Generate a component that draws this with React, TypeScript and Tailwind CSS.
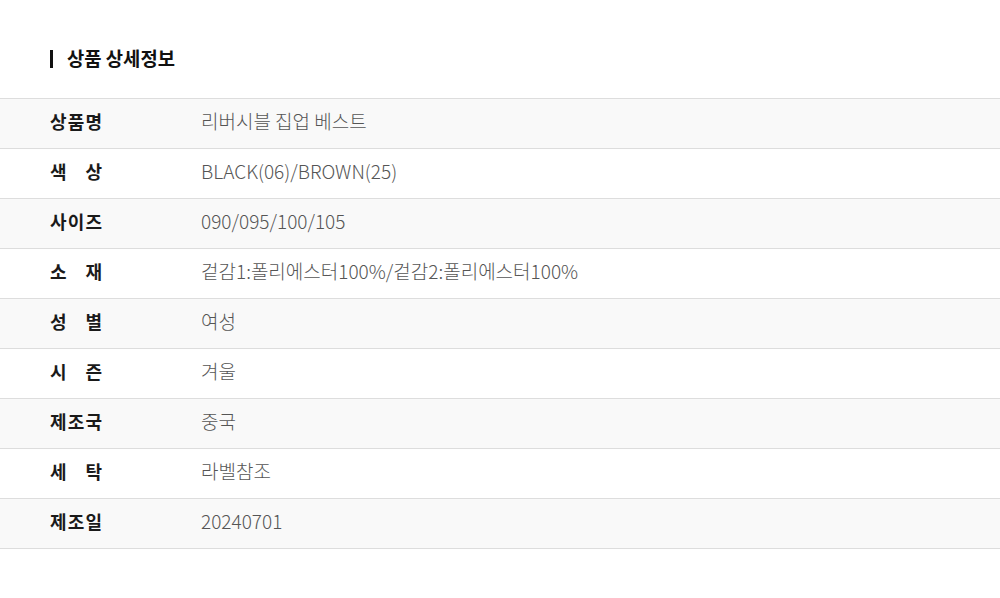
const rows: { label: string; value: string }[] = [
  { label: "상품명", value: "리버시블 집업 베스트" },
  { label: "색상", value: "BLACK(06)/BROWN(25)" },
  { label: "사이즈", value: "090/095/100/105" },
  { label: "소재", value: "겉감1:폴리에스터100%/겉감2:폴리에스터100%" },
  { label: "성별", value: "여성" },
  { label: "시즌", value: "겨울" },
  { label: "제조국", value: "중국" },
  { label: "세탁", value: "라벨참조" },
  { label: "제조일", value: "20240701" },
];

export default function App() {
  return (
    <div
      className="w-[1000px] h-[598px] bg-white pt-[47px]"
      style={{ fontFamily: '"Noto Sans CJK KR", "Noto Sans", sans-serif' }}
    >
      {/* Title */}
      <div className="flex items-center h-[24px] pl-[50px] mb-[27px]">
        <span className="w-[3px] h-[18px] bg-[#111]" />
        <h2 className="ml-[14px] text-[18.8px] font-bold text-[#111] leading-none pb-[2px]">
          상품 상세정보
        </h2>
      </div>

      {/* Table */}
      <div className="border-t border-[#dddddd]">
        {rows.map((row, i) => (
          <div
            key={row.label}
            className={`flex items-center h-[50px] pb-[4px] border-b border-[#dddddd] ${
              i % 2 === 0 ? "bg-[#f9f9f9]" : "bg-white"
            }`}
          >
            <div className="w-[201px] pl-[50px]">
              <div className="w-[52px] flex justify-between text-[18px] font-bold text-[#1a1a1a]">
                {row.label.split("").map((ch, j) => (
                  <span key={j}>{ch}</span>
                ))}
              </div>
            </div>
            <div className="text-[19px] font-light text-[#555]">
              {row.value}
            </div>
          </div>
        ))}
      </div>
    </div>
  );
}
